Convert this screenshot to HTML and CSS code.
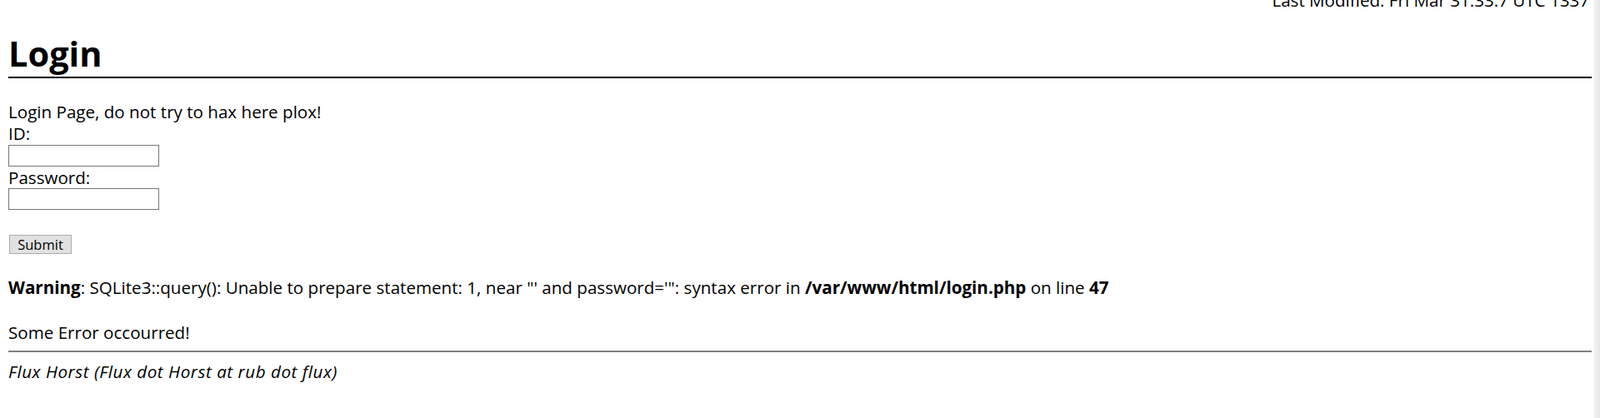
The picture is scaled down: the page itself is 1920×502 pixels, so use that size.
FILE: index.html
```html
<!DOCTYPE html>
<html>
<head>
<meta charset="utf-8">
<title>Login</title>
<link rel="stylesheet" href="styles.css">
</head>
<body>
<div class="modified">Last Modified: Fri Mar 31:33:7 UTC 1337</div>
<h1 class="title">Login</h1>
<form class="login" method="post">
  <div class="line">Login Page, do not try to hax here plox!</div>
  <div class="line">ID:</div>
  <input class="field" type="text" name="id">
  <div class="line">Password:</div>
  <input class="field" type="password" name="pw">
  <div class="submit-row"><input class="btn" type="submit" value="Submit"></div>
</form>
<div class="warning"><b>Warning</b>: SQLite3::query(): Unable to prepare statement: 1, near "' and password='": syntax error in <b>/var/www/html/login.php</b> on line <b>47</b></div>
<div class="error">Some Error occourred!</div>
<hr class="rule">
<address class="author">Flux Horst (Flux dot Horst at rub dot flux)</address>
<div class="scrollbar"></div>
</body>
</html>
```
FILE: styles.css
```css
html, body {
  background: #fff;
}
body {
  margin: 0 10px;
  font-family: "Open Sans", "Noto Sans", sans-serif;
  font-size: 20.6px;
  line-height: 26.5px;
  color: #000;
  overflow: hidden;
}
.modified {
  text-align: right;
  margin-top: -13px;
  padding-right: 3px;
}
.title {
  font-size: 41.5px;
  line-height: 52px;
  font-weight: bold;
  margin: 24px 0 0 0;
  border-bottom: 2px solid #000;
  padding-bottom: 2px;
}
.login {
  margin: 27px 0 0 0;
}
.line {
  height: 26.5px;
}
.field {
  display: block;
  box-sizing: border-box;
  width: 181px;
  height: 26px;
  margin: 0;
  padding: 0;
  border: 1px solid #767676;
  background: #fff;
}
.submit-row {
  padding-top: 30px;
  padding-left: 1px;
}
.btn {
  display: block;
  box-sizing: border-box;
  width: 75px;
  height: 23px;
  margin: 0;
  padding: 0;
  font-family: "Open Sans", "Noto Sans", sans-serif;
  font-size: 16.5px;
  line-height: 20px;
  background: #e1e1e1;
  border: 1px solid #adadad;
  color: #000;
}
.warning {
  margin-top: 27px;
}
.error {
  margin-top: 27px;
}
.rule {
  margin: 9px 0 0 0;
  border: 0;
  height: 2px;
  background: #808080;
}
.author {
  margin-top: 10px;
  font-style: italic;
  letter-spacing: 0.55px;
}
.scrollbar {
  position: fixed;
  top: 0;
  right: 0;
  width: 8px;
  height: 100%;
  background: linear-gradient(to right, #f6f6f6, #e6e6e6);
}
```
